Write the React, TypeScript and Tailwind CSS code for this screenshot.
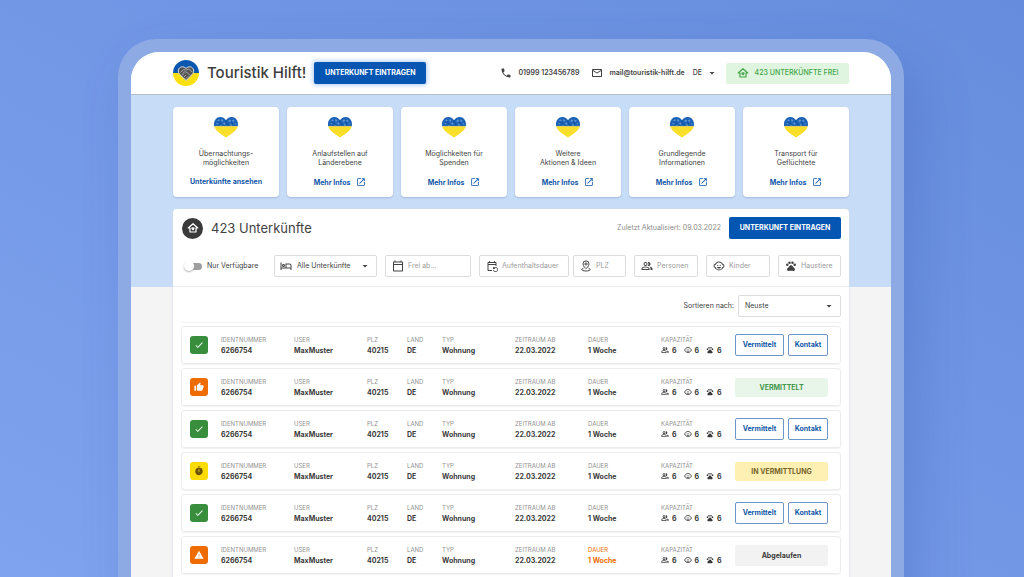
import type { ReactNode } from "react";
import type { IconType } from "react-icons";
import {
  MdArrowDropDown,
  MdCheck,
  MdChildCare,
  MdMailOutline,
  MdOpenInNew,
  MdOutlineCalendarToday,
  MdOutlineEventRepeat,
  MdOutlineHotel,
  MdOutlinePeopleAlt,
  MdPets,
  MdPhone,
  MdThumbUp,
  MdTimer,
  MdWarning,
} from "react-icons/md";

type Status = "open" | "placed" | "pending" | "expired";

const topics = [
  { lines: ["Übernachtungs-", "möglichkeiten"], link: "Unterkünfte ansehen", external: false },
  { lines: ["Anlaufstellen auf", "Länderebene"], link: "Mehr Infos", external: true },
  { lines: ["Möglichkeiten für", "Spenden"], link: "Mehr Infos", external: true },
  { lines: ["Weitere", "Aktionen & Ideen"], link: "Mehr Infos", external: true },
  { lines: ["Grundlegende", "Informationen"], link: "Mehr Infos", external: true },
  { lines: ["Transport für", "Geflüchtete"], link: "Mehr Infos", external: true },
];

const listings: Status[] = ["open", "placed", "open", "pending", "open", "expired"];

const statusIcons: Record<Status, { icon: IconType; className: string }> = {
  open: { icon: MdCheck, className: "bg-[#388e3c] text-white" },
  placed: { icon: MdThumbUp, className: "bg-[#ef6c00] text-white" },
  pending: { icon: MdTimer, className: "bg-[#fadb05] text-[#6b5200]" },
  expired: { icon: MdWarning, className: "bg-[#ef6c00] text-white" },
};

function LogoIcon() {
  return (
    <svg viewBox="0 0 26 26" className="size-[26px] shrink-0" aria-hidden="true">
      <path d="M0 13a13 13 0 0 1 26 0z" fill="#0b57b0" />
      <path d="M0 13a13 13 0 0 0 26 0z" fill="#fbe00e" />
      <path
        d="M13 20.500 6.800 14.400C4.200 11.700 5.200 7.600 8.500 6.900c1.900-.4 3.400.4 4.500 1.600 1.100-1.200 2.600-2 4.500-1.600 3.300.7 4.300 4.800 1.700 7.500z"
        fill="#555"
        stroke="#d9dde2"
        strokeWidth="1"
      />
      <path
        d="M7.500 12.200 11 9.500l2.200.4 3.200-.8 2.400 2.800M9.500 13.800l2.400-2.200 2 .9 3.600 3M9.500 15.200l1.200-1.200M11.200 16.800l1.500-1.500M13 18.400l1.500-1.500"
        fill="none"
        stroke="#b5b5b5"
        strokeWidth="0.8"
        strokeLinecap="round"
      />
    </svg>
  );
}

function HeartIcon() {
  return (
    <svg viewBox="0 0 26 22" className="h-[22px] w-[26px]" aria-hidden="true">
      <path d="M1.200 10.200C.2 5.600 2.800 1.200 7.200 1c2.600-.1 4.600 1.200 5.800 3.200C14.200 2.200 16.200.9 18.800 1c4.400.2 7 4.600 6 9.200z" fill="#1c62b5" />
      <path d="M1.200 10.200h23.600c-.8 3.300-3.600 5.300-5.800 7.200L13 21.500l-6-4.100c-2.200-1.900-5-3.900-5.800-7.200z" fill="#fadf2a" />
      <path
        d="M4 4.500l1.500-1.300 1.200 1-1 1.600zM8.500 3l1.800 1-.6 1.700-1.600-.8zM2.800 8l1.700-1.300 1.200 1.500zM10 7.500l1.300-1.600 1.200 1.800-1 1.400zM15 5.500l1.400-1.900 1.800.5-1 2zM19.500 3.500l2.300 1.300-1.200 1.300-1.500-1zM21 8l1.600-1 .8 1.600zM16.500 8.800l1.200-1.600 1.500 1.300z"
        fill="#5f92d8"
      />
      <path d="M6.500 7l1.800 1.300M12.600 4.800l1 3M18 6.500l2 1M4.500 6h2M14 9l1.500-1" stroke="#0d4796" strokeWidth="0.8" fill="none" />
      <path d="M1.400 10.600l2.400-.9 2 .5 2.200-.6 2.500.7 2.500-.6 2.500.6 2.500-.7 2.500.7 2.500-.6 1.800.9z" fill="#c9c677" />
    </svg>
  );
}

function HouseIcon() {
  return (
    <svg viewBox="0 0 24 24" className="size-3 shrink-0" aria-hidden="true">
      <path
        d="M12 3.500 2.500 12H6v8h12v-8h3.500z"
        fill="none"
        stroke="currentColor"
        strokeWidth="2.400"
        strokeLinejoin="round"
      />
      <path
        d="M12 17.200l-2.600-2.600c-1.500-1.600-.7-3.700.9-3.900.7-.1 1.300.2 1.700.8.400-.6 1-.9 1.700-.8 1.600.2 2.400 2.300.9 3.900z"
        fill="currentColor"
      />
    </svg>
  );
}

function PinIcon() {
  return (
    <svg
      viewBox="0 0 24 24"
      className="size-3 shrink-0"
      fill="none"
      stroke="currentColor"
      strokeWidth="2"
      aria-hidden="true"
    >
      <path d="M12 17.500S6 12.500 6 7.800a6 6 0 0 1 12 0c0 4.700-6 9.700-6 9.700z" />
      <circle cx="12" cy="8" r="2.200" />
      <path d="M7 16.500c-2.300.5-3.500 1.300-3.500 2.300 0 1.800 3.800 3.200 8.500 3.200s8.500-1.400 8.500-3.200c0-1-1.200-1.800-3.500-2.300" />
    </svg>
  );
}

function AddButton({ glow = false }: { glow?: boolean }) {
  return (
    <button
      type="button"
      className={`h-[22px] w-28 shrink-0 rounded-[2px] bg-[#0556b3] text-[7px] font-bold whitespace-nowrap text-white ${
        glow ? "shadow-[0_0_5px_1px_#a9cbf5]" : ""
      }`}
    >
      UNTERKUNFT EINTRAGEN
    </button>
  );
}

function Header() {
  return (
    <header className="flex h-[43px] items-center border-b border-[#b4bfcd] bg-white px-[42px]">
      <LogoIcon />
      <h1 className="ml-2 text-[15px] leading-5 font-medium whitespace-nowrap text-[#3d3d3d]">Touristik Hilft!</h1>
      <div className="ml-2 flex">
        <AddButton glow />
      </div>
      <div className="ml-auto flex items-center whitespace-nowrap text-[7px] font-semibold text-[#424242]">
        <a href="tel:01999123456789" className="flex items-center gap-[6px]">
          <MdPhone className="size-3" />
          01999 123456789
        </a>
        <a href="mailto:mail@touristik-hilft.de" className="ml-3 flex items-center gap-[6px]">
          <MdMailOutline className="size-3" />
          mail@touristik-hilft.de
        </a>
        <button type="button" className="ml-2 flex items-center gap-1 font-medium">
          DE
          <MdArrowDropDown className="size-3" />
        </button>
        <span className="ml-2 flex h-[21px] w-[123px] items-center justify-center gap-[6px] rounded-[2px] bg-[#dff5e0] font-medium text-[#43a548]">
          <HouseIcon />
          423 UNTERKÜNFTE FREI
        </span>
      </div>
    </header>
  );
}

function Topics() {
  return (
    <section className="grid grid-cols-6 gap-2">
      {topics.map((topic) => (
        <article
          key={topic.lines[0]}
          className="flex h-[90px] flex-col items-center rounded-[4px] bg-white pt-[9px] text-center text-[7px] leading-[9px] text-[#424242] shadow-[0_1px_2px_#a3bad8]"
        >
          <HeartIcon />
          <p className="mt-[11px]">
            {topic.lines[0]}
            <br />
            {topic.lines[1]}
          </p>
          <a href="#" className="mt-[10px] flex items-center gap-[6px] font-bold whitespace-nowrap text-[#1257a8]">
            {topic.link}
            {topic.external && <MdOpenInNew className="size-[10px]" />}
          </a>
        </article>
      ))}
    </section>
  );
}

interface FilterFieldProps {
  label: string;
  icon: ReactNode;
  className: string;
}

function FilterField({ label, icon, className }: FilterFieldProps) {
  return (
    <label className={`flex h-[22px] items-center gap-1 rounded-[2px] border border-[#dcdcdc] pl-[6px] text-[#424242] ${className}`}>
      {icon}
      <input
        type="text"
        aria-label={label}
        placeholder={label}
        className="w-full min-w-0 text-[7px] outline-none placeholder:text-[#9b9b9b]"
      />
    </label>
  );
}

function Filters() {
  return (
    <form className="flex items-center gap-2 border-b border-[#ebebeb] pr-2 pb-[9px] pl-[11px]">
      <label className="mr-auto flex items-center gap-[5px] whitespace-nowrap text-[7px] text-[#424242]">
        <input type="checkbox" role="switch" className="peer sr-only" />
        <span className="flex h-[7px] w-[18px] items-center rounded-full bg-linear-to-r from-white from-40% to-[#9e9e9e] to-40%">
          <span className="size-[10px] rounded-full bg-white shadow-[0_1px_2px_#b0b0b0]" />
        </span>
        Nur Verfügbare
      </label>
      <div className="relative h-[22px] w-[103px] text-[#424242]">
        <MdOutlineHotel className="absolute top-[5px] left-[6px] size-3" />
        <select
          aria-label="Art der Unterkunft"
          className="block size-full appearance-none rounded-[2px] border border-[#dcdcdc] pl-[22px] text-[7px]"
        >
          <option>Alle Unterkünfte</option>
        </select>
        <MdArrowDropDown className="pointer-events-none absolute top-[5px] right-[6px] size-3" />
      </div>
      <FilterField label="Frei ab..." className="w-[86px]" icon={<MdOutlineCalendarToday className="size-3 shrink-0" />} />
      <div className="flex gap-1">
        <FilterField label="Aufenthaltsdauer" className="w-[90px]" icon={<MdOutlineEventRepeat className="size-3 shrink-0" />} />
        <FilterField label="PLZ" className="w-[53px]" icon={<PinIcon />} />
      </div>
      <FilterField label="Personen" className="w-16" icon={<MdOutlinePeopleAlt className="size-3 shrink-0" />} />
      <FilterField label="Kinder" className="w-16" icon={<MdChildCare className="size-3 shrink-0" />} />
      <FilterField label="Haustiere" className="w-[63px]" icon={<MdPets className="size-3 shrink-0" />} />
    </form>
  );
}

function Field({ label, value, highlight = false }: { label: string; value: string; highlight?: boolean }) {
  return (
    <div className={highlight ? "text-[#ef6c00]" : "text-[#3a3a3a]"}>
      <dt className={`text-[6px] leading-[10px] ${highlight ? "" : "text-[#929292]"}`}>{label}</dt>
      <dd className="text-[7px] leading-[11px] font-bold">{value}</dd>
    </div>
  );
}

function Capacity() {
  return (
    <div>
      <dt className="text-[6px] leading-[10px] text-[#929292]">KAPAZITÄT</dt>
      <dd className="flex gap-[7px] text-[7px] leading-[11px] font-bold text-[#3a3a3a]">
        <span className="flex items-center gap-[3px]">
          <MdOutlinePeopleAlt className="size-2" />6
        </span>
        <span className="flex items-center gap-[3px]">
          <MdChildCare className="size-2" />6
        </span>
        <span className="flex items-center gap-[3px]">
          <MdPets className="size-2" />6
        </span>
      </dd>
    </div>
  );
}

function Actions({ status }: { status: Status }) {
  switch (status) {
    case "open":
      return (
        <div className="flex gap-1 text-[7px] font-bold text-[#1257a8]">
          <button type="button" className="h-[22px] w-[49px] rounded-[2px] border border-[#6c95c9]">
            Vermittelt
          </button>
          <button type="button" className="h-[22px] flex-1 rounded-[2px] border border-[#6c95c9]">
            Kontakt
          </button>
        </div>
      );
    case "placed":
      return (
        <p className="rounded-[2px] bg-[#e8f6e9] text-center text-[7px] leading-[19px] font-bold text-[#43974a]">
          VERMITTELT
        </p>
      );
    case "pending":
      return (
        <p className="rounded-[2px] bg-[#fdf0b2] text-center text-[7px] leading-[19px] font-bold text-[#76642c]">
          IN VERMITTLUNG
        </p>
      );
    default:
      return (
        <p className="rounded-[2px] bg-[#f2f2f2] text-center text-[7px] leading-[21px] font-bold text-[#3a3a3a]">
          Abgelaufen
        </p>
      );
  }
}

function Listing({ status }: { status: Status }) {
  const { icon: Icon, className } = statusIcons[status];

  return (
    <li className="h-[38px] rounded-[3px] border border-[#ececec] pr-3 pl-2 shadow-[0_1px_1px_#f3f3f3]">
      <dl className="grid h-full grid-cols-[31px_73fr_73fr_40fr_35fr_73fr_73fr_73fr_74fr_93px] items-center whitespace-nowrap">
        <div className={`flex size-[18px] items-center justify-center rounded-[3px] ${className}`}>
          <Icon className="size-[10px]" />
        </div>
        <Field label="IDENTNUMMER" value="6266754" />
        <Field label="USER" value="MaxMuster" />
        <Field label="PLZ" value="40215" />
        <Field label="LAND" value="DE" />
        <Field label="TYP" value="Wohnung" />
        <Field label="ZEITRAUM AB" value="22.03.2022" />
        <Field label="DAUER" value="1 Woche" highlight={status === "expired"} />
        <Capacity />
        <Actions status={status} />
      </dl>
    </li>
  );
}

export default function App() {
  return (
    <div className="h-screen overflow-hidden bg-linear-to-tr from-[#7fa3ee] to-[#668cdd] pt-[39px] pr-[120px] pl-[118px] font-['Inter',sans-serif]">
      <div className="rounded-t-[38px] bg-[#8daae5] px-[13px] pt-[13px] shadow-[16px_24px_50px_rgba(50,85,170,0.25)]">
        <div className="min-h-screen overflow-hidden rounded-t-[28px] bg-[linear-gradient(#c7dcf7_235px,#f4f4f4_235px)]">
          <Header />
          <main className="px-[42px] pt-3">
            <Topics />
            <section className="mt-3 min-h-screen rounded-t-[4px] bg-white shadow-[0_0_3px_#d5dbe3]">
              <div className="flex items-center pt-2 pr-2 pl-[9px]">
                <span className="flex size-[21px] items-center justify-center rounded-full bg-[#3a3a3a] text-white">
                  <HouseIcon />
                </span>
                <h2 className="ml-2 text-[13px] leading-5 text-[#424242]">423 Unterkünfte</h2>
                <p className="mr-2 ml-auto text-[7px] text-[#8c8c8c]">Zuletzt Aktualisiert: 09.03.2022</p>
                <AddButton />
              </div>
              <div className="mt-4">
                <Filters />
              </div>
              <div className="flex items-center justify-end gap-1 pt-2 pr-2 text-[7px] text-[#424242]">
                <label htmlFor="sort">Sortieren nach:</label>
                <div className="relative h-[22px] w-[103px]">
                  <select
                    id="sort"
                    className="block size-full appearance-none rounded-[2px] border border-[#dcdcdc] pl-[6px]"
                  >
                    <option>Neuste</option>
                  </select>
                  <MdArrowDropDown className="pointer-events-none absolute top-[5px] right-[6px] size-3" />
                </div>
              </div>
              <ul className="mx-2 mt-[5px] flex flex-col gap-1 border-t border-[#f3f3f3] pt-[3px]">
                {listings.map((status, index) => (
                  <Listing key={index} status={status} />
                ))}
              </ul>
            </section>
          </main>
        </div>
      </div>
    </div>
  );
}
